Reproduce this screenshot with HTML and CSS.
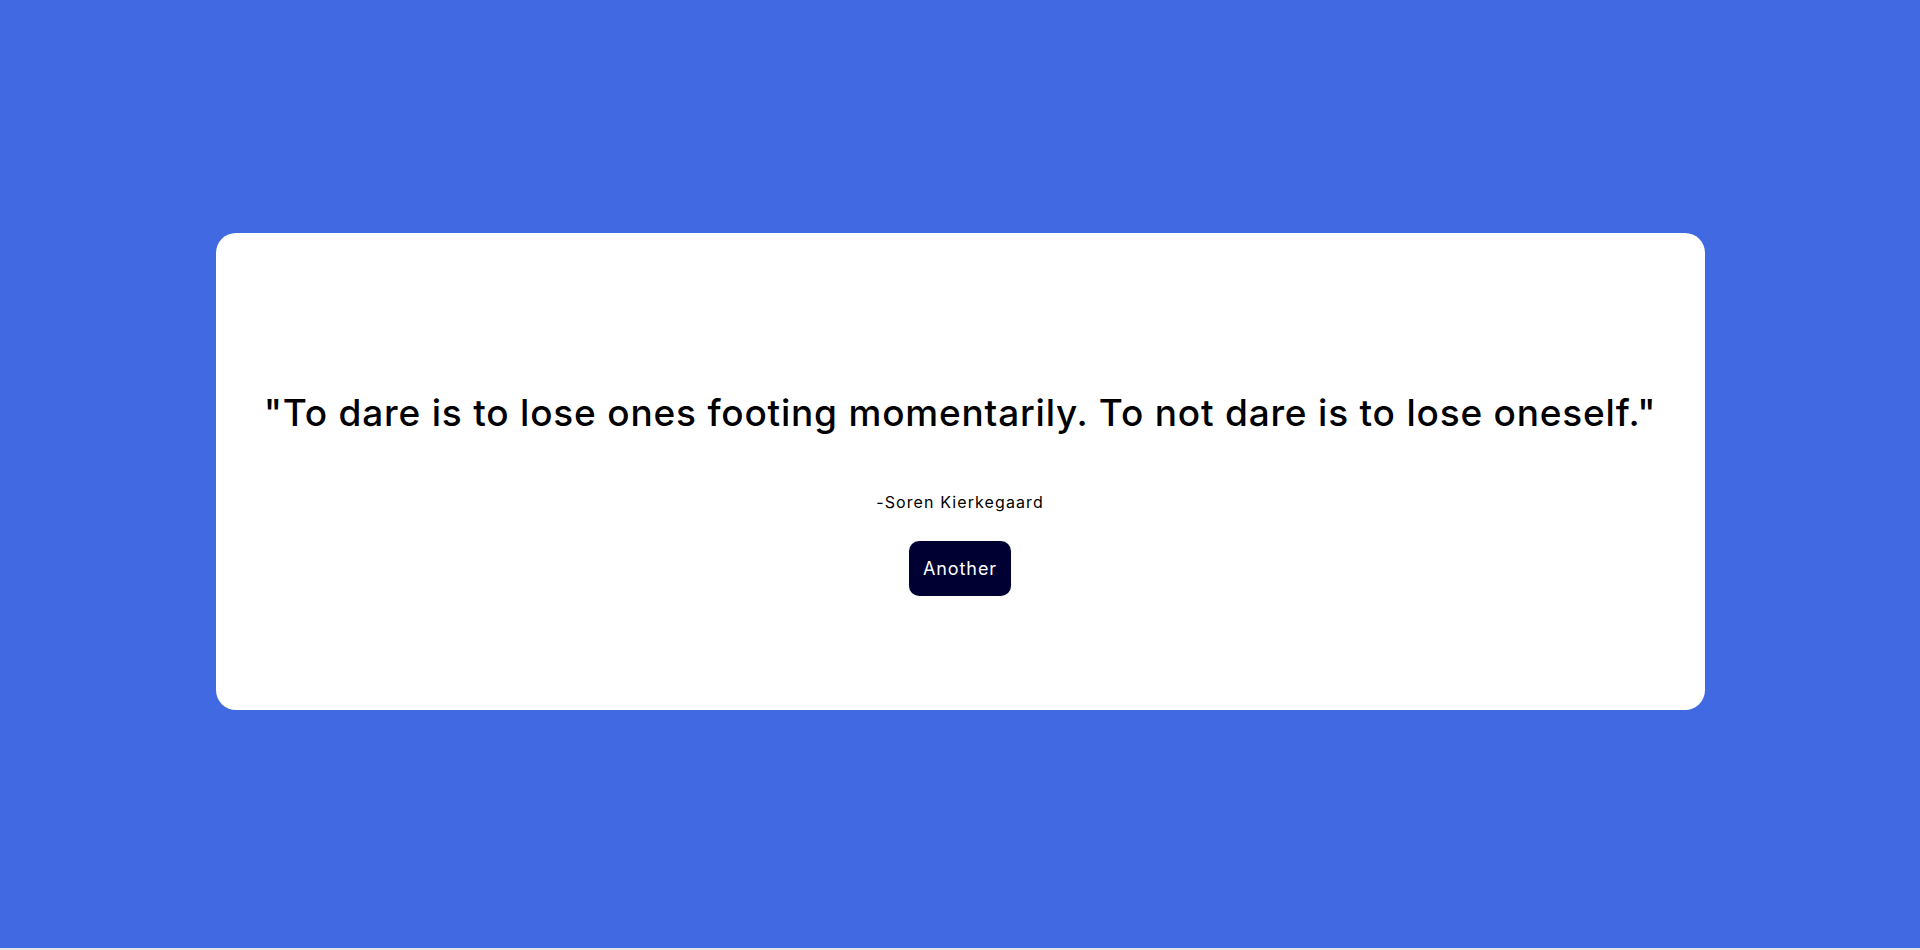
FILE: index.html
```html
<!DOCTYPE html>
<html lang="en">
<head>
<meta charset="utf-8">
<title>Quote Generator</title>
<link rel="stylesheet" href="styles.css">
</head>
<body>
  <main class="card">
    <h1 class="quote">"To dare is to lose ones footing momentarily. To not dare is to lose oneself."</h1>
    <p class="author">-Soren Kierkegaard</p>
    <button class="btn" type="button">Another</button>
  </main>
</body>
</html>
```
FILE: styles.css
```css
html {
  background: #e6e6e6;
}
body {
  box-sizing: border-box;
  margin: 0;
  padding-bottom: 5px;
  min-height: calc(100vh - 2px);
  background: #4169e1;
  display: flex;
  align-items: center;
  justify-content: center;
  font-family: Inter, "Open Sans", sans-serif;
}
.card {
  box-sizing: border-box;
  width: 1489px;
  height: 477px;
  background: #ffffff;
  border-radius: 20px;
  padding-top: 158px;
  display: flex;
  flex-direction: column;
  align-items: center;
}
.quote {
  margin: 0;
  font-size: 37px;
  line-height: 44px;
  font-weight: 450;
  letter-spacing: 0.8px;
  color: #000;
  white-space: nowrap;
}
.author {
  margin: 55px 0 0;
  font-size: 16px;
  line-height: 24px;
  letter-spacing: 1.1px;
  color: #000;
}
.btn {
  margin-top: 27px;
  height: 55px;
  padding: 0 14px;
  border: none;
  border-radius: 10px;
  background: #000033;
  color: #fff;
  font-family: inherit;
  font-size: 18px;
  font-weight: 400;
  letter-spacing: 0.9px;
  cursor: pointer;
}
```
